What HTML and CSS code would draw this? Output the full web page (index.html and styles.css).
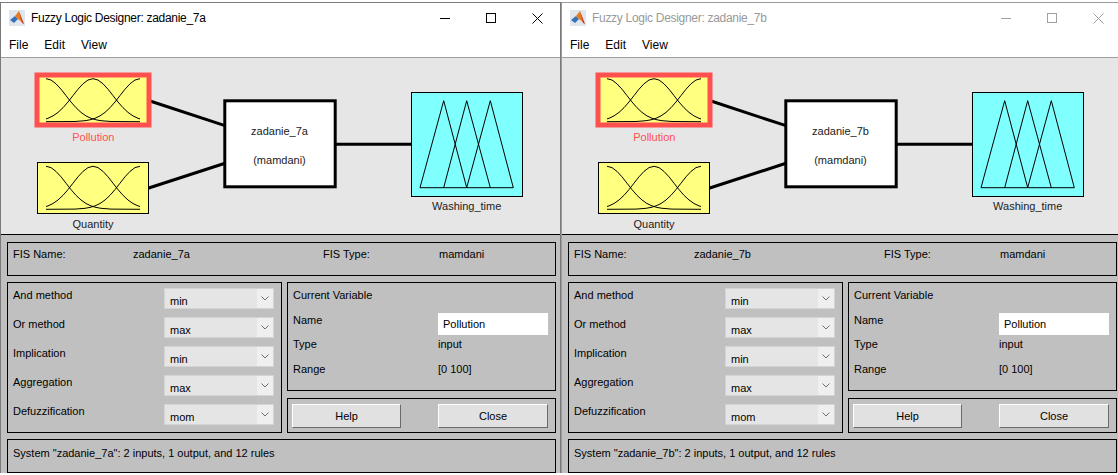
FILE: index.html
```html
<!DOCTYPE html>
<html lang="en">
<head>
<meta charset="utf-8">
<title>Fuzzy Logic Designer</title>
<link rel="stylesheet" href="styles.css">
</head>
<body>
<div class="desk">
  <div class="doc-strip"></div>
  <div class="windows">

    <section class="window active">
      <div class="titlebar">
        <svg class="app-icon" viewBox="0 0 16 16"><rect x="0" y="0" width="16" height="16" fill="#dfe6ee"/><polygon points="1,10 6,6 9,9 5,13" fill="#3b6fb6"/><polygon points="6,6 10,1 14,13 9,9" fill="#ea7a1e"/><polygon points="10,1 15,14 13,13" fill="#c8371f"/></svg>
        <span class="title">Fuzzy Logic Designer: zadanie_7a</span>
        <div class="controls">
          <span class="ctl"><svg width="10" height="10" viewBox="0 0 10 10"><path d="M0 5.5H10"/></svg></span>
          <span class="ctl"><svg width="10" height="10" viewBox="0 0 10 10"><rect x="0.5" y="0.5" width="9" height="9"/></svg></span>
          <span class="ctl"><svg width="11" height="11" viewBox="0 0 11 11"><path d="M0.5 0.5L10.5 10.5M10.5 0.5L0.5 10.5"/></svg></span>
        </div>
      </div>
      <div class="menubar"><span>File</span><span>Edit</span><span>View</span></div>
      <div class="canvas">
        <svg class="diagram" width="559" height="176" viewBox="1 58 559 176">
          <defs>
            <path id="gs7a" d="M-95,0 L-65,-0.2 L-55,-1 L-50,-1.9 L-45,-3.4 L-40,-5.8 L-35,-9.3 L-30,-14 L-25,-19.7 L-20,-26.1 L-15,-32.5 L-10,-37.9 L-5,-41.7 L0,-43 L5,-41.7 L10,-37.9 L15,-32.5 L20,-26.1 L25,-19.7 L30,-14 L35,-9.3 L40,-5.8 L45,-3.4 L50,-1.9 L55,-1 L65,-0.2 L95,0"/>
            <clipPath id="cp7a"><rect x="46" y="60" width="94" height="170"/></clipPath>
          </defs>
          <line class="wire" x1="150" y1="101" x2="225" y2="125.7"/>
          <line class="wire" x1="148" y1="188.3" x2="225" y2="163.3"/>
          <line class="wire" x1="336" y1="144.3" x2="412" y2="144.3"/>
          <rect class="in-box sel" x="37" y="75" width="112" height="50"/>
          <g class="mf" clip-path="url(#cp7a)">
            <use href="#gs7a" transform="translate(46,121.7)"/>
            <use href="#gs7a" transform="translate(93,121.7)"/>
            <use href="#gs7a" transform="translate(140,121.7)"/>
          </g>
          <text class="lbl sel-t" x="93.3" y="136.5">Pollution</text>
          <rect class="in-box" x="37.5" y="162.5" width="111" height="51"/>
          <g class="mf" clip-path="url(#cp7a)">
            <use href="#gs7a" transform="translate(46,209.3)"/>
            <use href="#gs7a" transform="translate(93,209.3)"/>
            <use href="#gs7a" transform="translate(140,209.3)"/>
          </g>
          <text class="lbl" x="93" y="223.5">Quantity</text>
          <rect class="sys-box" x="224.8" y="100.8" width="110.4" height="86"/>
          <text class="lbl" x="279.5" y="131">zadanie_7a</text>
          <text class="lbl" x="279.5" y="159.5">(mamdani)</text>
          <rect class="out-box" x="411.5" y="92.5" width="111" height="104"/>
          <path class="mf" d="M420,187.7 L443.7,100.7 L466.7,187.7 M443.7,187.7 L466.7,100.7 L490.3,187.7 M466.7,187.7 L490.3,100.7 L513.3,187.7 M420,187.7 L513.3,187.7"/>
          <text class="lbl" x="466.7" y="206.3">Washing_time</text>
        </svg>
      </div>
      <div class="panels">
        <div class="panel fis">
          <span>FIS Name:</span><span>zadanie_7a</span><span>FIS Type:</span><span>mamdani</span>
        </div>
        <div class="panel methods">
          <span class="label">And method</span><div class="select"><span class="val">min</span><span class="arrow"><svg width="8" height="5" viewBox="0 0 8 5"><path d="M0.5 0.5L4 4L7.5 0.5"/></svg></span></div>
          <span class="label">Or method</span><div class="select"><span class="val">max</span><span class="arrow"><svg width="8" height="5" viewBox="0 0 8 5"><path d="M0.5 0.5L4 4L7.5 0.5"/></svg></span></div>
          <span class="label">Implication</span><div class="select"><span class="val">min</span><span class="arrow"><svg width="8" height="5" viewBox="0 0 8 5"><path d="M0.5 0.5L4 4L7.5 0.5"/></svg></span></div>
          <span class="label">Aggregation</span><div class="select"><span class="val">max</span><span class="arrow"><svg width="8" height="5" viewBox="0 0 8 5"><path d="M0.5 0.5L4 4L7.5 0.5"/></svg></span></div>
          <span class="label">Defuzzification</span><div class="select"><span class="val">mom</span><span class="arrow"><svg width="8" height="5" viewBox="0 0 8 5"><path d="M0.5 0.5L4 4L7.5 0.5"/></svg></span></div>
        </div>
        <div class="rightcol">
          <div class="panel curvar">
            <span class="cv-head">Current Variable</span>
            <span class="label">Name</span><div class="edit">Pollution</div>
            <span>Type</span><span>input</span>
            <span>Range</span><span>[0 100]</span>
          </div>
          <div class="panel buttons">
            <div class="btn help">Help</div><div class="btn">Close</div>
          </div>
        </div>
        <div class="panel status">System "zadanie_7a": 2 inputs, 1 output, and 12 rules</div>
      </div>
    </section>

    <section class="window inactive">
      <div class="titlebar">
        <svg class="app-icon" viewBox="0 0 16 16"><rect x="0" y="0" width="16" height="16" fill="#dfe6ee"/><polygon points="1,10 6,6 9,9 5,13" fill="#3b6fb6"/><polygon points="6,6 10,1 14,13 9,9" fill="#ea7a1e"/><polygon points="10,1 15,14 13,13" fill="#c8371f"/></svg>
        <span class="title">Fuzzy Logic Designer: zadanie_7b</span>
        <div class="controls">
          <span class="ctl"><svg width="10" height="10" viewBox="0 0 10 10"><path d="M0 5.5H10"/></svg></span>
          <span class="ctl"><svg width="10" height="10" viewBox="0 0 10 10"><rect x="0.5" y="0.5" width="9" height="9"/></svg></span>
          <span class="ctl"><svg width="11" height="11" viewBox="0 0 11 11"><path d="M0.5 0.5L10.5 10.5M10.5 0.5L0.5 10.5"/></svg></span>
        </div>
      </div>
      <div class="menubar"><span>File</span><span>Edit</span><span>View</span></div>
      <div class="canvas">
        <svg class="diagram" width="559" height="176" viewBox="1 58 559 176">
          <defs>
            <path id="gs7b" d="M-95,0 L-65,-0.2 L-55,-1 L-50,-1.9 L-45,-3.4 L-40,-5.8 L-35,-9.3 L-30,-14 L-25,-19.7 L-20,-26.1 L-15,-32.5 L-10,-37.9 L-5,-41.7 L0,-43 L5,-41.7 L10,-37.9 L15,-32.5 L20,-26.1 L25,-19.7 L30,-14 L35,-9.3 L40,-5.8 L45,-3.4 L50,-1.9 L55,-1 L65,-0.2 L95,0"/>
            <clipPath id="cp7b"><rect x="46" y="60" width="94" height="170"/></clipPath>
          </defs>
          <line class="wire" x1="150" y1="101" x2="225" y2="125.7"/>
          <line class="wire" x1="148" y1="188.3" x2="225" y2="163.3"/>
          <line class="wire" x1="336" y1="144.3" x2="412" y2="144.3"/>
          <rect class="in-box sel" x="37" y="75" width="112" height="50"/>
          <g class="mf" clip-path="url(#cp7b)">
            <use href="#gs7b" transform="translate(46,121.7)"/>
            <use href="#gs7b" transform="translate(93,121.7)"/>
            <use href="#gs7b" transform="translate(140,121.7)"/>
          </g>
          <text class="lbl sel-t" x="93.3" y="136.5">Pollution</text>
          <rect class="in-box" x="37.5" y="162.5" width="111" height="51"/>
          <g class="mf" clip-path="url(#cp7b)">
            <use href="#gs7b" transform="translate(46,209.3)"/>
            <use href="#gs7b" transform="translate(93,209.3)"/>
            <use href="#gs7b" transform="translate(140,209.3)"/>
          </g>
          <text class="lbl" x="93" y="223.5">Quantity</text>
          <rect class="sys-box" x="224.8" y="100.8" width="110.4" height="86"/>
          <text class="lbl" x="279.5" y="131">zadanie_7b</text>
          <text class="lbl" x="279.5" y="159.5">(mamdani)</text>
          <rect class="out-box" x="411.5" y="92.5" width="111" height="104"/>
          <path class="mf" d="M420,187.7 L443.7,100.7 L466.7,187.7 M443.7,187.7 L466.7,100.7 L490.3,187.7 M466.7,187.7 L490.3,100.7 L513.3,187.7 M420,187.7 L513.3,187.7"/>
          <text class="lbl" x="466.7" y="206.3">Washing_time</text>
        </svg>
      </div>
      <div class="panels">
        <div class="panel fis">
          <span>FIS Name:</span><span>zadanie_7b</span><span>FIS Type:</span><span>mamdani</span>
        </div>
        <div class="panel methods">
          <span class="label">And method</span><div class="select"><span class="val">min</span><span class="arrow"><svg width="8" height="5" viewBox="0 0 8 5"><path d="M0.5 0.5L4 4L7.5 0.5"/></svg></span></div>
          <span class="label">Or method</span><div class="select"><span class="val">max</span><span class="arrow"><svg width="8" height="5" viewBox="0 0 8 5"><path d="M0.5 0.5L4 4L7.5 0.5"/></svg></span></div>
          <span class="label">Implication</span><div class="select"><span class="val">min</span><span class="arrow"><svg width="8" height="5" viewBox="0 0 8 5"><path d="M0.5 0.5L4 4L7.5 0.5"/></svg></span></div>
          <span class="label">Aggregation</span><div class="select"><span class="val">max</span><span class="arrow"><svg width="8" height="5" viewBox="0 0 8 5"><path d="M0.5 0.5L4 4L7.5 0.5"/></svg></span></div>
          <span class="label">Defuzzification</span><div class="select"><span class="val">mom</span><span class="arrow"><svg width="8" height="5" viewBox="0 0 8 5"><path d="M0.5 0.5L4 4L7.5 0.5"/></svg></span></div>
        </div>
        <div class="rightcol">
          <div class="panel curvar">
            <span class="cv-head">Current Variable</span>
            <span class="label">Name</span><div class="edit">Pollution</div>
            <span>Type</span><span>input</span>
            <span>Range</span><span>[0 100]</span>
          </div>
          <div class="panel buttons">
            <div class="btn help">Help</div><div class="btn">Close</div>
          </div>
        </div>
        <div class="panel status">System "zadanie_7b": 2 inputs, 1 output, and 12 rules</div>
      </div>
    </section>

  </div>
</div>
</body>
</html>
```

FILE: styles.css
```css
* { box-sizing: border-box; }
html, body { margin: 0; padding: 0; }
body {
  width: 1118px;
  height: 475px;
  overflow: hidden;
  background: #fff;
  font-family: "Liberation Sans", Arial, sans-serif;
  color: #000;
}
.desk { display: flex; flex-direction: column; }
.doc-strip { height: 2px; background: #fff; }
.windows { display: flex; align-items: flex-start; }

.window {
  flex: 0 0 561px;
  width: 561px;
  border: 1px solid #7a7a7a;
  border-bottom: 0;
  background: #fff;
  display: flex;
  flex-direction: column;
}
.window.inactive { border-color: #9a9a9a; }

.titlebar {
  height: 30px;
  background: #fff;
  display: flex;
  align-items: center;
}
.app-icon { margin-left: 8px; width: 16px; height: 16px; flex: none; }
.title { margin-left: 6px; font-size: 12px; letter-spacing: -0.3px; color: #000; white-space: nowrap; }
.inactive .title { color: #999; }
.controls { margin-left: auto; display: flex; height: 100%; }
.ctl { width: 46px; display: flex; align-items: center; justify-content: center; }
.ctl svg { stroke: #000; stroke-width: 1; fill: none; }
.inactive .ctl svg { stroke: #a0a0a0; }

.menubar {
  height: 25px;
  background: #fff;
  border-bottom: 1px solid #a0a0a0;
  display: flex;
  align-items: center;
  gap: 16px;
  padding-left: 8px;
  font-size: 12px;
}

.canvas {
  height: 177px;
  background: #e6e6e6;
  border-bottom: 1px solid #000;
}
.diagram { display: block; }
.wire { stroke: #000; stroke-width: 3; }
.in-box { fill: #ffff80; stroke: #000; stroke-width: 1; }
.in-box.sel { stroke: #ff5050; stroke-width: 5; }
.sys-box { fill: #fff; stroke: #000; stroke-width: 3; }
.out-box { fill: #80ffff; stroke: #000; stroke-width: 1; }
.mf { fill: none; stroke: #000; stroke-width: 1; stroke-linejoin: round; }
.lbl {
  font-family: "Liberation Sans", Arial, sans-serif;
  font-size: 11px;
  fill: #222;
  text-anchor: middle;
  dominant-baseline: central;
}
.lbl.sel-t { fill: #ff5050; }

.panels {
  background: #c0c0c0;
  padding: 7px 4px 0 6px;
  display: grid;
  grid-template-columns: 275px 269px;
  grid-template-rows: 34px 151px 34px;
  column-gap: 5px;
  row-gap: 6px;
  font-size: 11px;
  line-height: 13px;
}
.panel { border: 1px solid #000; }

.fis {
  grid-column: 1 / 3;
  display: grid;
  grid-template-columns: 120px 190px 116px auto;
  align-content: start;
  padding: 5px 0 0 5px;
}

.methods {
  display: grid;
  grid-template-columns: 151px 110px;
  grid-auto-rows: 29px;
  align-content: start;
  padding: 5px 7px 0 5px;
}
.label { padding-top: 1px; }
.select {
  height: 21px;
  display: flex;
  background: #e5e5e5;
  border: 1px solid #d4d4d4;
}
.select .val { flex: 1; padding: 6px 0 0 5px; }
.select .arrow {
  width: 16px;
  background: #efefef;
  display: flex;
  align-items: center;
  justify-content: center;
}
.select .arrow svg { fill: none; stroke: #707070; stroke-width: 1; }

.rightcol { display: flex; flex-direction: column; gap: 7px; }
.curvar {
  height: 109px;
  display: grid;
  grid-template-columns: 145px 110px;
  grid-template-rows: 24px 25px 25px 25px;
  padding: 6px 0 0 5px;
}
.cv-head { grid-column: 1 / 3; }
.edit {
  height: 22px;
  background: #fff;
  padding: 5px 0 0 5px;
}
.buttons {
  flex: 1;
  display: grid;
  grid-template-columns: 146px 110px;
  align-content: start;
  padding: 5px 0 0 4px;
}
.btn {
  height: 24px;
  background: #e1e1e1;
  border: 1px solid;
  border-color: #ffffff #6a6a6a #6a6a6a #ffffff;
  display: flex;
  align-items: center;
  justify-content: center;
}
.btn.help { width: 109px; }

.status {
  grid-column: 1 / 3;
  padding: 7px 0 0 5px;
}
```
